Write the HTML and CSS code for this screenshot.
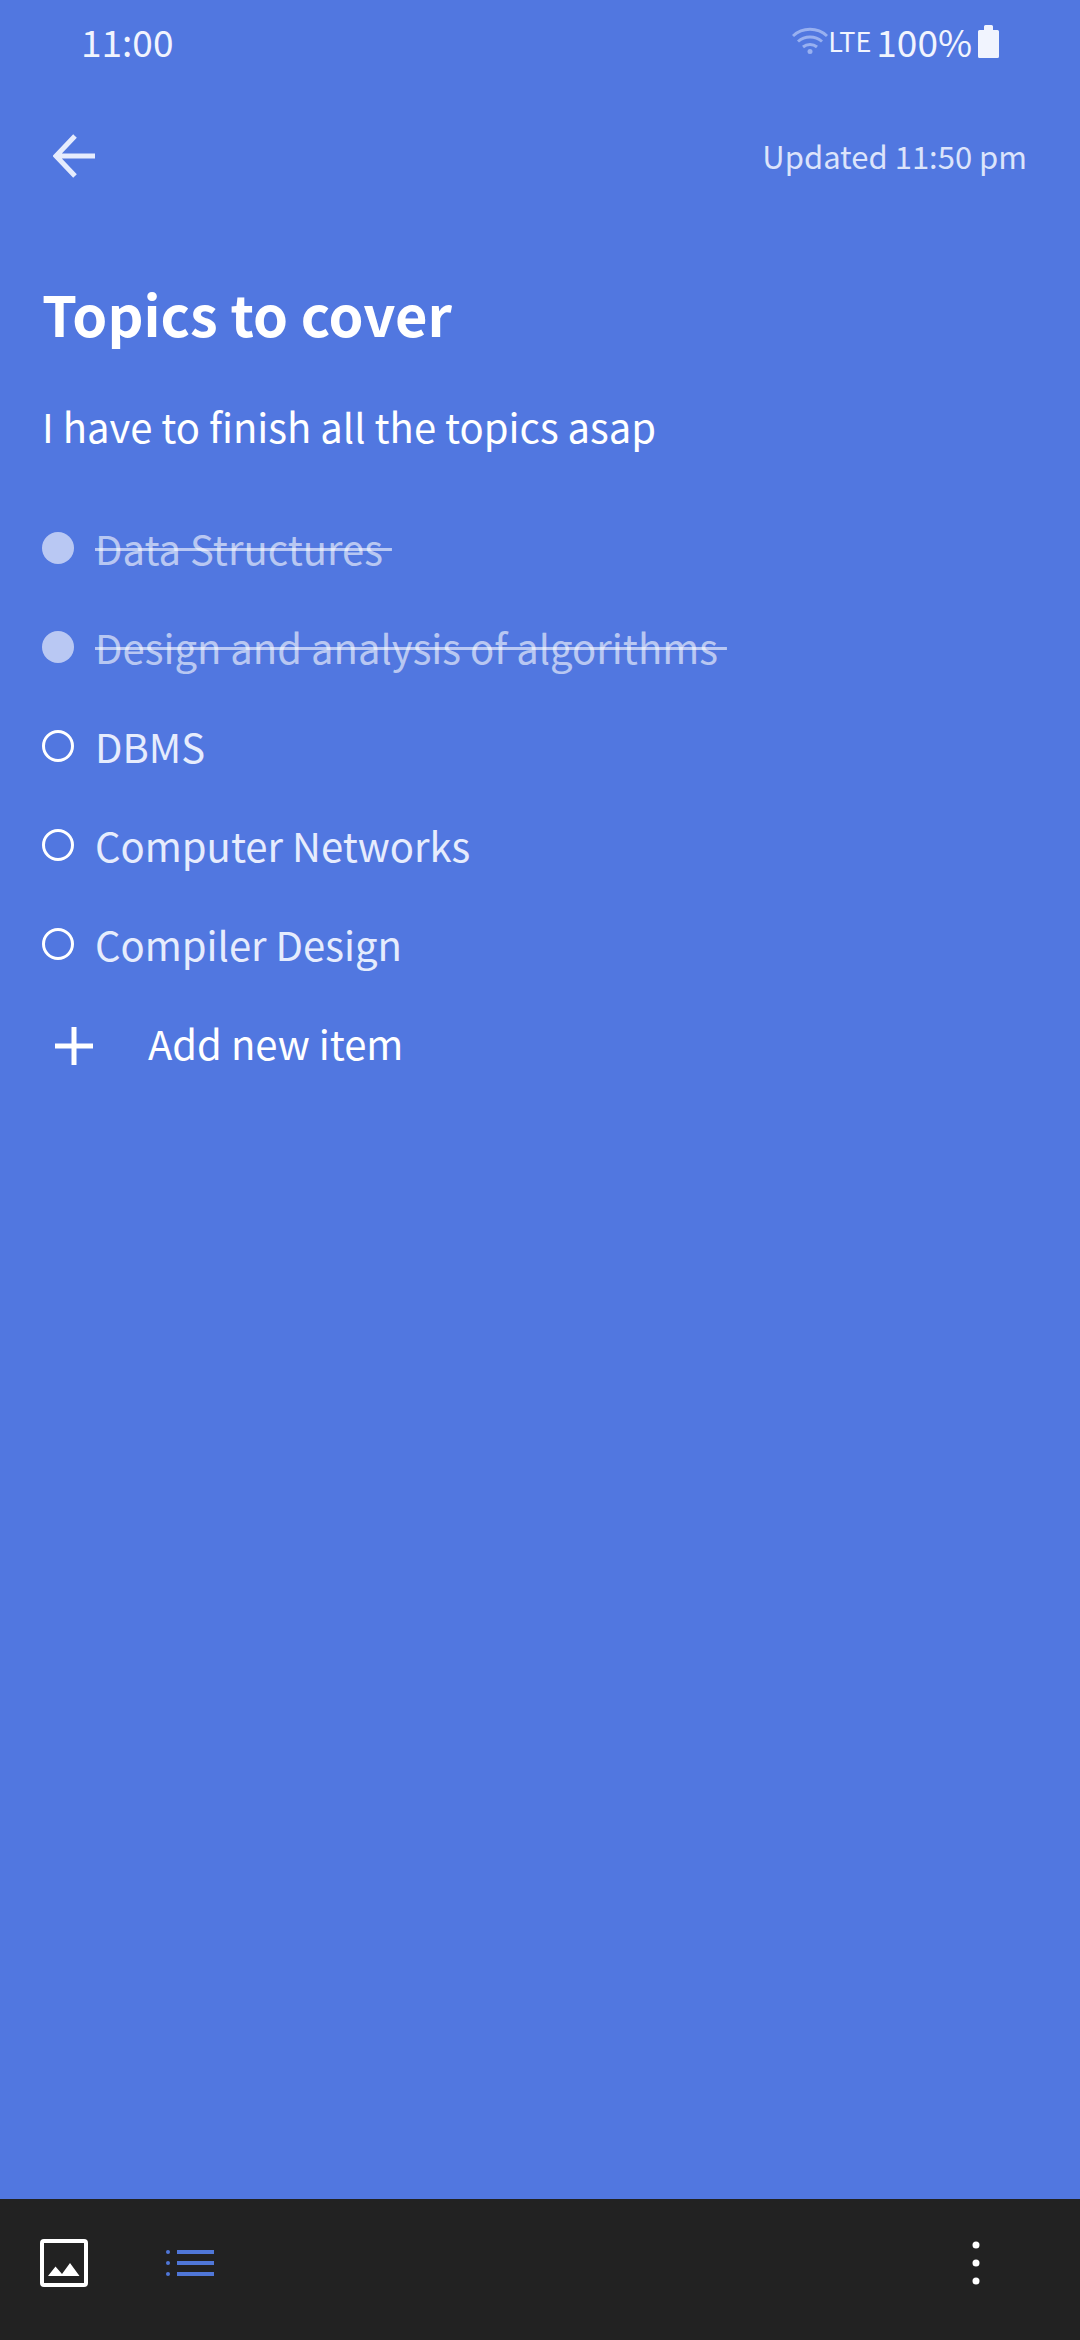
FILE: index.html
```html
<!DOCTYPE html>
<html lang="en">
<head>
<meta charset="utf-8">
<meta name="viewport" content="width=device-width">
<title>Topics to cover</title>
<link rel="stylesheet" href="styles.css">
</head>
<body>
<div class="screen">
  <div class="status">
    <time class="clock">11:00</time>
    <div class="indicators">
      <svg class="wifi" viewBox="0 0 36 28" width="36" height="28" aria-hidden="true">
        <path d="M1 9a25 25 0 0 1 34 0M6 14.500a18 18 0 0 1 24 0M11 20a11 11 0 0 1 14 0"/>
        <circle cx="18" cy="24.500" r="2.500"/>
      </svg>
      <span class="network">LTE</span>
      <span class="charge">100%</span>
      <svg class="battery" viewBox="0 0 21 33" width="21" height="33" aria-hidden="true">
        <path d="M6 5V1.500Q6 0 7.500 0h6Q15 0 15 1.500V5h4.500Q21 5 21 6.500v25Q21 33 19.500 33h-18Q0 33 0 31.500v-25Q0 5 1.500 5z"/>
      </svg>
    </div>
  </div>
  <header class="topbar">
    <button class="icon-button back" aria-label="Back">
      <svg viewBox="0 0 42 44" width="42" height="44"><path d="M22 2 3 22l19 20M3 22h39"/></svg>
    </button>
    <p class="updated">Updated 11:50 pm</p>
  </header>
  <main class="note">
    <h1 class="title">Topics to cover</h1>
    <p class="body">I have to finish all the topics asap</p>
    <ul class="items">
      <li><label class="item"><input type="checkbox" checked><span class="text">Data Structures </span></label></li>
      <li><label class="item"><input type="checkbox" checked><span class="text">Design and analysis of algorithms </span></label></li>
      <li><label class="item"><input type="checkbox"><span class="text">DBMS</span></label></li>
      <li><label class="item"><input type="checkbox"><span class="text">Computer Networks</span></label></li>
      <li><label class="item"><input type="checkbox"><span class="text">Compiler Design</span></label></li>
    </ul>
    <button class="add">
      <svg viewBox="0 0 38 44" width="38" height="44" aria-hidden="true"><path d="M19 6v38M0 25h38"/></svg>
      Add new item
    </button>
  </main>
  <footer class="toolbar">
    <button class="icon-button" aria-label="Add image">
      <svg viewBox="0 0 48 48" width="48" height="48">
        <rect x="2" y="2" width="44" height="44" rx="2" fill="none" stroke="currentColor" stroke-width="4"/>
        <path fill="currentColor" d="m8 37 7.500-9.500 6.500 7.500 8-11 9.500 13z"/>
      </svg>
    </button>
    <button class="icon-button list" aria-label="Checklist">
      <svg viewBox="0 0 48 28" width="48" height="28" fill="currentColor">
        <circle cx="2" cy="3" r="2"/><circle cx="2" cy="14" r="2"/><circle cx="2" cy="25" r="2"/>
        <path d="M11 1h37v4H11zM11 12h37v4H11zM11 23h37v4H11z"/>
      </svg>
    </button>
    <button class="icon-button more" aria-label="More options">
      <svg viewBox="0 0 8 44" width="8" height="44" fill="currentColor">
        <circle cx="4" cy="4" r="3.500"/><circle cx="4" cy="22" r="3.500"/><circle cx="4" cy="40" r="3.500"/>
      </svg>
    </button>
  </footer>
</div>
</body>
</html>
```
FILE: styles.css
```css
* {
  box-sizing: border-box;
  margin: 0;
  padding: 0;
}

body {
  background: #5177e0;
  color: #fff;
  font: 40px/60px "Noto Sans CJK SC", "Noto Sans", sans-serif;
}

button {
  background: none;
  border: 0;
  color: inherit;
  font: inherit;
  cursor: pointer;
}

svg {
  display: block;
}

.screen {
  display: flex;
  flex-direction: column;
  min-height: 100vh;
}

.status {
  display: flex;
  align-items: center;
  justify-content: space-between;
  height: 82px;
  padding: 0 81px;
  color: #f1f4fe;
  font-size: 37px;
}

.indicators {
  display: flex;
  align-items: center;
}

.wifi {
  fill: #98b0f0;
}

.wifi path {
  fill: none;
  stroke: #98b0f0;
  stroke-width: 3;
}

.network {
  font-size: 27px;
}

.charge {
  margin: 0 6px 0 5px;
}

.battery {
  fill: currentColor;
}

.topbar {
  display: flex;
  align-items: center;
  justify-content: space-between;
  height: 148px;
  padding: 0 53px;
}

.icon-button {
  display: flex;
}

.back svg {
  fill: none;
  stroke: #e6ecfd;
  stroke-width: 5;
}

.updated {
  color: #dce4fb;
  font-size: 31px;
}

.note {
  flex: 1;
  padding: 40px 42px;
}

.title {
  font-size: 56px;
  font-weight: 700;
  line-height: 86px;
}

.body {
  margin: 40px 0 42px;
}

.items {
  list-style: none;
}

.item {
  display: flex;
  align-items: center;
  gap: 21px;
  height: 99px;
}

.item input {
  appearance: none;
  width: 32px;
  height: 32px;
  border: 3px solid #fff;
  border-radius: 50%;
}

.item input:checked {
  border: 0;
  background: #b9c8f3;
}

.text {
  color: #e6ecfd;
  white-space: pre;
}

.item input:checked + .text {
  color: rgba(255, 255, 255, 0.6);
  text-decoration: line-through 3px;
}

.add {
  display: flex;
  align-items: center;
  gap: 55px;
  height: 99px;
  padding-left: 13px;
}

.add svg {
  fill: none;
  stroke: #fff;
  stroke-width: 5;
}

.toolbar {
  display: flex;
  align-items: center;
  gap: 78px;
  height: 141px;
  padding: 0 100px 14px 40px;
  background: #222;
}

.list {
  color: #5077d8;
}

.more {
  margin-left: auto;
}
```
